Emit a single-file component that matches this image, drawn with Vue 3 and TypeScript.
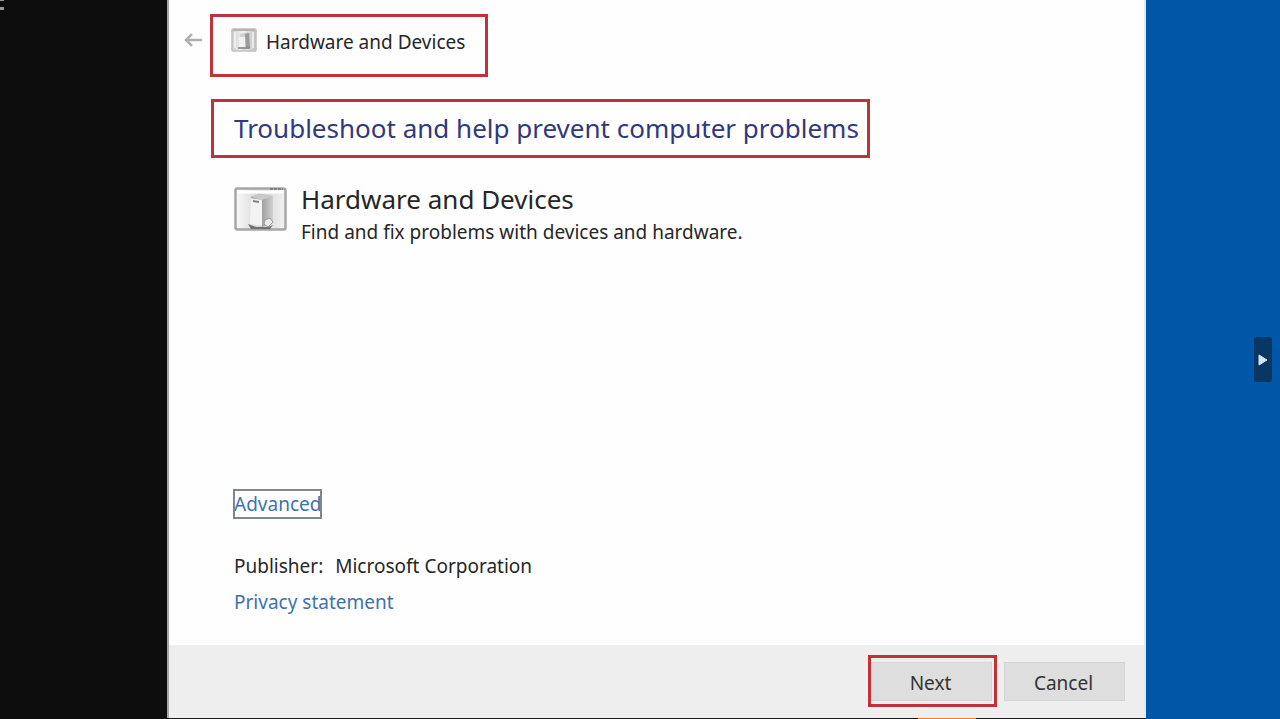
<script setup lang="ts">
import { ref } from 'vue'

const title = 'Hardware and Devices'
const panelOpen = ref(false)
</script>

<template>
  <div class="desktop">
    <aside class="terminal">
      <span class="prompt-mark top"></span>
      <span class="prompt-mark low"></span>
    </aside>
    <div class="center">
      <main class="wizard">
        <header class="titlebar">
          <button class="back" type="button" aria-label="Back">
            <svg width="20" height="16" viewBox="0 0 20 16" fill="none" stroke="#b0b0b0" stroke-width="2.500">
              <path d="M19 8H3M9 2 3 8l6 6" />
            </svg>
          </button>
          <div class="marked caption">
            <svg class="caption-icon" width="26" height="24" viewBox="0 0 26 24">
              <defs>
                <linearGradient id="capBg" x1="0" x2="1">
                  <stop offset="0" stop-color="#d2d2d2" />
                  <stop offset=".5" stop-color="#f4f4f4" />
                  <stop offset="1" stop-color="#bdbdbd" />
                </linearGradient>
              </defs>
              <rect x="1" y="1" width="24" height="22" rx="1" fill="url(#capBg)" stroke="#c0c0c0" stroke-width="1.500" />
              <path d="M2 2h22" stroke="#b4b4b4" stroke-width="2" />
              <path d="M4 4v16M22 4v16" fill="none" stroke="#f5f5f5" stroke-width="1.500" />
              <path d="M9 6 17 4l3 2v14l-7 2-5-2z" fill="#cfcfcf" />
              <path d="m14 6 4-1 1 14-4 2z" fill="#9a9a9a" />
              <path d="M8 9h6v10H8z" fill="#f0f0f0" />
              <path d="M7 20h12" stroke="#858585" stroke-width="1.500" />
            </svg>
            <span>{{ title }}</span>
          </div>
        </header>

        <section class="content">
          <h1 class="marked headline">Troubleshoot and help prevent computer problems</h1>
          <div class="item">
            <svg class="item-icon" width="53" height="46" viewBox="0 0 53 46">
              <defs>
                <linearGradient id="itemBg" x1="0" x2="1">
                  <stop offset="0" stop-color="#fafafa" />
                  <stop offset=".5" stop-color="#d4d4d4" />
                  <stop offset="1" stop-color="#f2f2f2" />
                </linearGradient>
                <linearGradient id="towerSide" x1="0" x2="1">
                  <stop offset="0" stop-color="#8a8a8a" />
                  <stop offset=".6" stop-color="#a8a8a8" />
                  <stop offset="1" stop-color="#d0d0d0" />
                </linearGradient>
              </defs>
              <rect x="1.500" y="2.500" width="50" height="41" rx="2" fill="url(#itemBg)" stroke="#a6a6a6" stroke-width="2.500" />
              <path d="M4 6h45" stroke="#fff" stroke-width="3" />
              <path d="M36 3h13" stroke="#808080" stroke-width="2" stroke-dasharray="3 1" />
              <path d="m14 38 8 3h12l5-2-3 4H17z" fill="#707070" />
              <path d="m17 11 8-3 14 2v27l-11 4z" fill="url(#towerSide)" />
              <path d="m17 11 8-3 14 2-11 4z" fill="#c9c9c9" />
              <path d="m17 12 11 2v26l-12-2z" fill="#f3f3f3" />
              <path d="m19 15 6 1" stroke="#808080" stroke-width="2" />
              <path d="m31 34 5-2 3 4-5 5-4-3z" fill="#ececec" stroke="#999" />
            </svg>
            <div>
              <h2>{{ title }}</h2>
              <p>Find and fix problems with devices and hardware.</p>
            </div>
          </div>
          <div class="details">
            <a class="advanced" href="#advanced">Advanced</a>
            <dl class="publisher">
              <dt>Publisher:</dt>
              <dd>Microsoft Corporation</dd>
            </dl>
            <a class="privacy" href="#privacy">Privacy statement</a>
          </div>
        </section>

        <footer class="actions">
          <div class="marked next-mark">
            <button class="action" type="button">Next</button>
          </div>
          <button class="action" type="button">Cancel</button>
        </footer>
      </main>
      <div class="taskbar"><span class="task-accent"></span></div>
    </div>
    <aside class="wallpaper">
      <button class="expander" type="button" aria-label="Toggle side panel" :aria-expanded="panelOpen" @click="panelOpen = !panelOpen">
        <svg width="10" height="14" viewBox="0 0 10 14">
          <path d="M1 2v10l8-5z" fill="#d3e5f6" stroke="#d3e5f6" stroke-linejoin="round" />
        </svg>
      </button>
    </aside>
  </div>
</template>

<style>
body {
  margin: 0;
}
</style>

<style scoped>
.desktop {
  display: flex;
  min-height: 100vh;
  font-family: "Noto Sans", "Open Sans", sans-serif;
  font-size: 19px;
  line-height: 28px;
  color: #262626;
  background: #0d0d0d;
}

.terminal {
  position: relative;
  flex: 0 0 167px;
  background: #0d0d0d;
}

.prompt-mark {
  position: absolute;
  left: 0;
  width: 4px;
  background: #999;
}

.prompt-mark.top {
  top: 0;
  height: 1px;
}

.prompt-mark.low {
  top: 7px;
  height: 3px;
}

.center {
  flex: 1;
  display: flex;
  flex-direction: column;
}

.wizard {
  flex: 1;
  display: flex;
  flex-direction: column;
  box-sizing: border-box;
  border-left: 2px solid #a6a6a6;
  border-right: 2px solid #dcecf7;
  background: #fefefe;
}

.marked {
  box-sizing: border-box;
  border: 3px solid #c0313a;
}

.titlebar {
  display: flex;
  align-items: flex-start;
  padding: 14px 14px 0;
}

.back {
  display: flex;
  margin: 18px 7px 0 0;
  padding: 0;
  border: 0;
  background: none;
}

.caption {
  display: flex;
  align-items: flex-start;
  gap: 9px;
  height: 63px;
  padding: 11px 20px 0 18px;
}

.content {
  flex: 1;
  display: flex;
  flex-direction: column;
  align-items: flex-start;
  padding: 22px 42px 29px;
}

.headline {
  margin: 0;
  padding: 8px 8px 8px 20px;
  font-size: 26px;
  line-height: 37px;
  font-weight: 400;
  color: #30397f;
}

.item {
  display: flex;
  gap: 14px;
  margin: 28px 0 0 23px;
}

.item-icon {
  flex: none;
}

h2 {
  margin: 0;
  font-size: 26px;
  line-height: 26px;
  font-weight: 400;
}

p {
  margin: 6px 0 0;
}

.details {
  display: flex;
  flex-direction: column;
  align-items: flex-start;
  margin: auto 0 0 23px;
}

a {
  color: #3f72ad;
  text-decoration: none;
}

.advanced {
  outline: 2px solid #7d8790;
  outline-offset: -1px;
}

.publisher {
  display: flex;
  gap: 12px;
  margin: 34px 0 8px;
}

dd {
  margin: 0;
}

.actions {
  display: flex;
  justify-content: flex-end;
  align-items: center;
  gap: 7px;
  padding: 10px 19px 11px;
  background: #eee;
}

.next-mark {
  padding: 4px 2px 3px 0;
}

.action {
  display: block;
  width: 121px;
  height: 39px;
  padding: 3px 2px 0 0;
  border: 1px solid #d4d4d4;
  background: #dedede;
  font: inherit;
  color: #333;
}

.taskbar {
  display: flex;
  justify-content: flex-end;
  height: 1px;
  padding-right: 170px;
  background: #17191c;
}

.task-accent {
  width: 58px;
  background: #f57c26;
}

.wallpaper {
  flex: 0 0 134px;
  display: flex;
  align-items: center;
  justify-content: flex-end;
  box-sizing: border-box;
  padding-right: 8px;
  background: #0057a8;
}

.expander {
  display: flex;
  align-items: center;
  justify-content: center;
  width: 18px;
  height: 45px;
  padding: 0;
  border: 0;
  border-radius: 3px;
  background: #073762;
}
</style>
